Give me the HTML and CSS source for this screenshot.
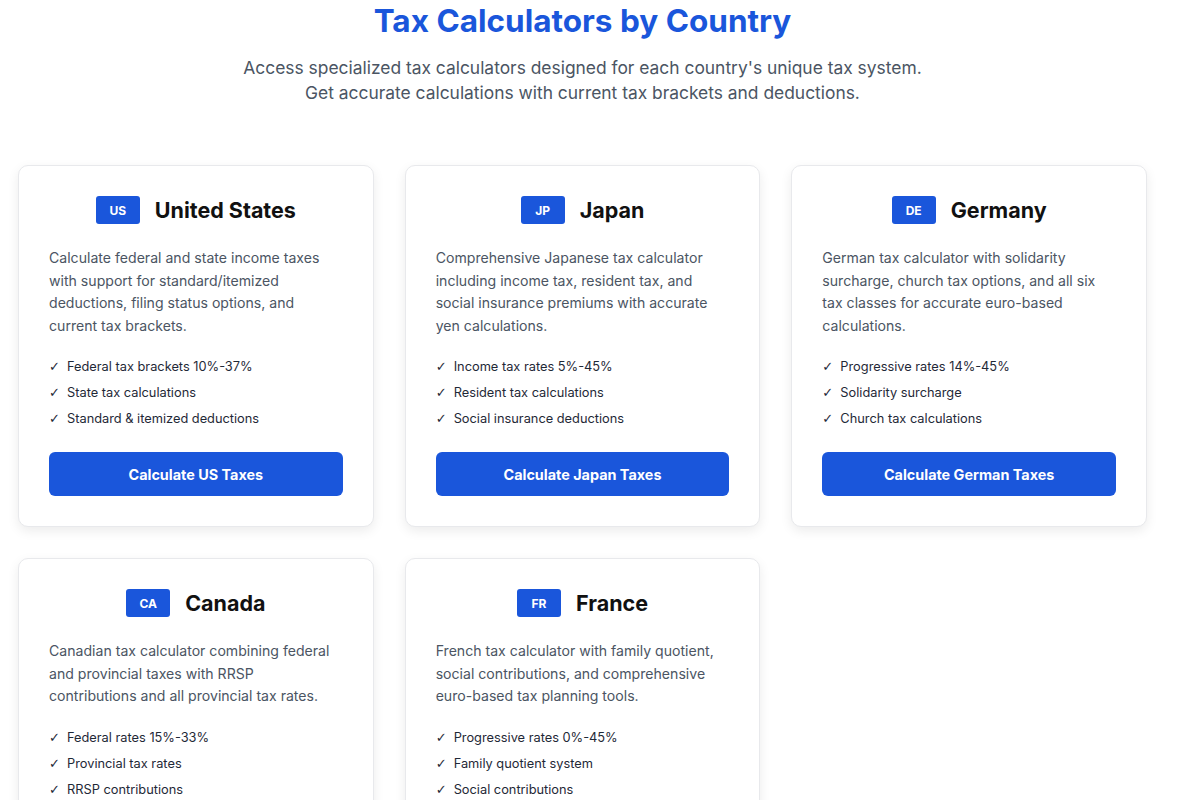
FILE: index.html
```html
<!DOCTYPE html>
<html lang="en">
<head>
    <meta charset="UTF-8">
    <meta name="viewport" content="width=device-width, initial-scale=1.0">
    <title>Tax Calculators by Country</title>
    <link rel="stylesheet" href="styles.css">
</head>
<body>

    <div class="page">
        <div class="intro">
            <h1>Tax Calculators by Country</h1>
            <p>Access specialized tax calculators designed for each country's unique tax system.<br>
            Get accurate calculations with current tax brackets and deductions.</p>
        </div>

        <div class="grid">
            <div class="card">
                <div class="card-head">
                    <span class="badge">US</span>
                    <h2>United States</h2>
                </div>
                <p class="desc">Calculate federal and state income taxes with support for standard/itemized deductions, filing status options, and current tax brackets.</p>
                <ul class="features">
                    <li>Federal tax brackets 10%-37%</li>
                    <li>State tax calculations</li>
                    <li>Standard &amp; itemized deductions</li>
                </ul>
                <button class="calc-button">Calculate US Taxes</button>
            </div>

            <div class="card">
                <div class="card-head">
                    <span class="badge">JP</span>
                    <h2>Japan</h2>
                </div>
                <p class="desc">Comprehensive Japanese tax calculator including income tax, resident tax, and social insurance premiums with accurate yen calculations.</p>
                <ul class="features">
                    <li>Income tax rates 5%-45%</li>
                    <li>Resident tax calculations</li>
                    <li>Social insurance deductions</li>
                </ul>
                <button class="calc-button">Calculate Japan Taxes</button>
            </div>

            <div class="card">
                <div class="card-head">
                    <span class="badge">DE</span>
                    <h2>Germany</h2>
                </div>
                <p class="desc">German tax calculator with solidarity surcharge, church tax options, and all six tax classes for accurate euro-based calculations.</p>
                <ul class="features">
                    <li>Progressive rates 14%-45%</li>
                    <li>Solidarity surcharge</li>
                    <li>Church tax calculations</li>
                </ul>
                <button class="calc-button">Calculate German Taxes</button>
            </div>

            <div class="card">
                <div class="card-head">
                    <span class="badge">CA</span>
                    <h2>Canada</h2>
                </div>
                <p class="desc">Canadian tax calculator combining federal and provincial taxes with RRSP contributions and all provincial tax rates.</p>
                <ul class="features">
                    <li>Federal rates 15%-33%</li>
                    <li>Provincial tax rates</li>
                    <li>RRSP contributions</li>
                </ul>
                <button class="calc-button">Calculate Canadian Taxes</button>
            </div>

            <div class="card">
                <div class="card-head">
                    <span class="badge">FR</span>
                    <h2>France</h2>
                </div>
                <p class="desc">French tax calculator with family quotient, social contributions, and comprehensive euro-based tax planning tools.</p>
                <ul class="features">
                    <li>Progressive rates 0%-45%</li>
                    <li>Family quotient system</li>
                    <li>Social contributions</li>
                </ul>
                <button class="calc-button">Calculate French Taxes</button>
            </div>
        </div>
    </div>

</body>
</html>
```

FILE: styles.css
```css
body {
    font-family: Inter, "Noto Sans", sans-serif;
    background-color: #ffffff;
    margin: 0;
    color: #111827;
}

.page {
    width: 1165px;
    padding: 0 18px;
    box-sizing: border-box;
    margin-top: 1px;
}

.intro {
    text-align: center;
    margin-bottom: 60px;
}

.intro h1 {
    font-size: 31.5px;
    line-height: 40px;
    font-weight: 700;
    color: #1a56db;
    margin: 0 0 14px 0;
}

.intro p {
    font-size: 17.4px;
    line-height: 25px;
    color: #4b5563;
    margin: 0;
}

.grid {
    display: grid;
    grid-template-columns: repeat(3, 1fr);
    gap: 31px;
}

.card {
    display: flex;
    flex-direction: column;
    padding: 30px;
    background-color: white;
    border: 1px solid #e8e9ec;
    border-radius: 10px;
    box-shadow: 0 4px 12px rgba(0, 0, 0, 0.08);
}

.card-head {
    display: flex;
    justify-content: center;
    align-items: center;
    gap: 15px;
    margin-bottom: 23px;
}

.badge {
    display: inline-flex;
    justify-content: center;
    align-items: center;
    width: 44px;
    height: 28px;
    background-color: #1a56db;
    color: white;
    font-size: 12px;
    font-weight: 700;
    border-radius: 3px;
}

.card-head h2 {
    font-size: 21.5px;
    font-weight: 700;
    margin: 0;
    color: #111;
}

.desc {
    font-size: 14.1px;
    line-height: 22.5px;
    color: #4b5563;
    margin: 0 0 20px 0;
}

.features {
    list-style: none;
    padding: 0;
    margin: 0 0 23px 0;
    display: flex;
    flex-direction: column;
    gap: 6px;
}

.features li {
    font-size: 12.8px;
    line-height: 20px;
    color: #1f2937;
}

.features li::before {
    content: "✓";
    display: inline-block;
    width: 18px;
    font-family: "DejaVu Sans", sans-serif;
    font-size: 13px;
    color: #1f2937;
}

.calc-button {
    height: 44px;
    font-family: inherit;
    font-size: 14.4px;
    font-weight: 700;
    color: white;
    background-color: #1a56db;
    border: none;
    border-radius: 6px;
    cursor: pointer;
}

.calc-button:hover {
    background-color: #1648b8;
}
```
